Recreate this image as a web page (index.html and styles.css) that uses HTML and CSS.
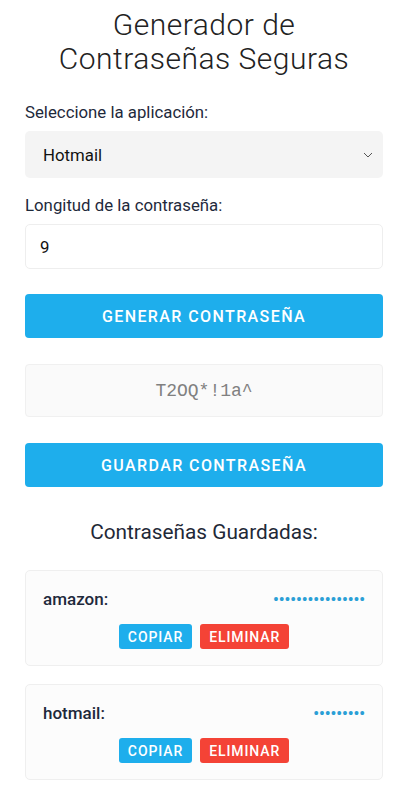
FILE: index.html
```html
<!DOCTYPE html>
<html lang="es">
<head>
<meta charset="utf-8">
<title>Generador de Contraseñas Seguras</title>
<link rel="stylesheet" href="styles.css">
</head>
<body>
<main class="app">
  <h1 class="title">Generador de<br>Contraseñas Seguras</h1>

  <label class="label" for="app">Seleccione la aplicación:</label>
  <div class="select">
    <span>Hotmail</span>
    <svg class="chev" width="10" height="6" viewBox="0 0 10 6"><path d="M1 1l4 4 4-4" fill="none" stroke="#555" stroke-width="1"/></svg>
  </div>

  <label class="label label-2" for="len">Longitud de la contraseña:</label>
  <div class="input">9</div>

  <button class="btn btn-main btn-gen">GENERAR CONTRASEÑA</button>

  <div class="output">T2OQ*!1a^</div>

  <button class="btn btn-main btn-save">GUARDAR CONTRASEÑA</button>

  <h2 class="subtitle">Contraseñas Guardadas:</h2>

  <div class="card">
    <div class="row">
      <span class="name">amazon:</span>
      <span class="dots">••••••••••••••••</span>
    </div>
    <div class="actions">
      <button class="btn-sm copy">COPIAR</button>
      <button class="btn-sm del">ELIMINAR</button>
    </div>
  </div>

  <div class="card">
    <div class="row">
      <span class="name">hotmail:</span>
      <span class="dots">•••••••••</span>
    </div>
    <div class="actions">
      <button class="btn-sm copy">COPIAR</button>
      <button class="btn-sm del">ELIMINAR</button>
    </div>
  </div>
</main>
</body>
</html>
```

FILE: styles.css
```css
* { box-sizing: border-box; }
body {
  margin: 0;
  background: #ffffff;
  font-family: Roboto, "Liberation Sans", sans-serif;
  color: #1f2937;
}
.app {
  display: flex;
  flex-direction: column;
  padding: 8px 25px 20px;
}
.title {
  margin: 0;
  text-align: center;
  font-weight: 300;
  font-size: 30px;
  line-height: 34px;
  letter-spacing: 0.5px;
  color: #222;
}
.label {
  display: block;
  font-size: 16.8px;
  line-height: 20px;
  margin-top: 26px;
  color: #1e293b;
}
.label-2 { margin-top: 17px; }
.select {
  margin-top: 9px;
  height: 47px;
  background: #f4f4f4;
  border-radius: 5px;
  display: flex;
  align-items: center;
  justify-content: space-between;
  padding: 0 10px 0 18px;
  font-size: 16.8px;
  color: #111;
}
.input {
  margin-top: 9px;
  height: 45px;
  border: 1px solid #eeeeee;
  border-radius: 5px;
  display: flex;
  align-items: center;
  padding: 0 14px;
  font-size: 16.8px;
  color: #111;
}
.btn {
  border: 0;
  font-family: Roboto, "Liberation Sans", sans-serif;
  cursor: pointer;
}
.btn-main {
  height: 44px;
  background: #1eaeec;
  color: #fff;
  font-weight: 500;
  font-size: 16px;
  letter-spacing: 1.4px;
  border-radius: 4px;
}
.btn-gen { margin-top: 25px; }
.output {
  margin-top: 26px;
  height: 53px;
  background: #fafafa;
  border: 1px solid #f0f0f0;
  border-radius: 4px;
  display: flex;
  align-items: center;
  justify-content: center;
  font-family: "Liberation Mono", monospace;
  font-size: 18px;
  color: #808080;
}
.btn-save { margin-top: 26px; }
.subtitle {
  margin: 32px 0 0;
  text-align: center;
  font-weight: 400;
  font-size: 20.8px;
  line-height: 26px;
  color: #1f2937;
}
.card {
  margin-top: 25px;
  background: #fcfcfc;
  border: 1px solid #efefef;
  border-radius: 5px;
  padding: 17px 17px 16px;
}
.card + .card { margin-top: 18px; }
.row {
  display: flex;
  justify-content: space-between;
  align-items: center;
  height: 22px;
}
.name {
  font-weight: 500;
  font-size: 17px;
  color: #1e293b;
}
.dots {
  color: #2a9fd6;
  font-size: 16px;
  letter-spacing: 0;
  font-weight: 700;
}
.actions {
  display: flex;
  justify-content: center;
  gap: 8px;
  margin-top: 14px;
}
.btn-sm {
  border: 0;
  height: 25px;
  padding: 0 9px;
  border-radius: 3px;
  color: #fff;
  font-family: Roboto, "Liberation Sans", sans-serif;
  font-weight: 500;
  font-size: 14px;
  letter-spacing: 0.9px;
}
.copy { background: #1eaeec; }
.del { background: #f44336; }
```
